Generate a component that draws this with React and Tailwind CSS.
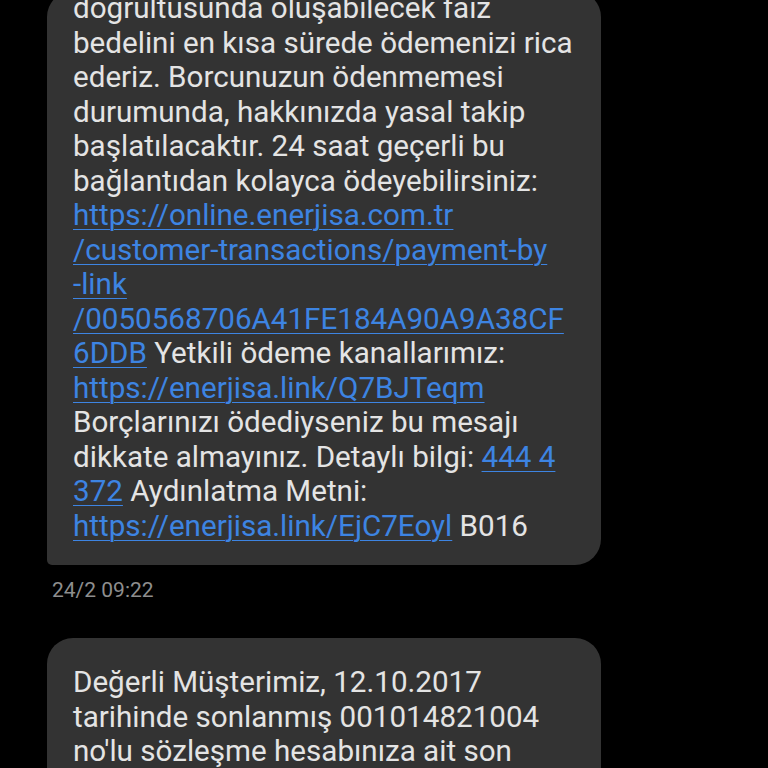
const Link = ({ children }) => (
  <span className="text-[#3d84e2] underline decoration-1 underline-offset-[4px]">{children}</span>
)

const Line = ({ children }) => <div className="whitespace-nowrap">{children}</div>

export default function App() {
  return (
    <div className="h-[768px] w-[768px] overflow-hidden bg-black font-['Roboto',sans-serif] text-[29.6px] leading-[34.5px] text-[#e4e4e4]">
      <div className="-mt-[9px] ml-[47px] w-[554px] rounded-tl-[26px] rounded-tr-[26px] rounded-br-[26px] rounded-bl-[5px] bg-[#333333] px-[26px] pb-[22px]">
        <Line>doğrultusunda oluşabilecek faiz</Line>
        <Line>bedelini en kısa sürede ödemenizi rica</Line>
        <Line>ederiz. Borcunuzun ödenmemesi</Line>
        <Line>durumunda, hakkınızda yasal takip</Line>
        <Line>başlatılacaktır. 24 saat geçerli bu</Line>
        <Line>bağlantıdan kolayca ödeyebilirsiniz:</Line>
        <Line><Link>https://online.enerjisa.com.tr</Link></Line>
        <Line><Link>/customer-transactions/payment-by</Link></Line>
        <Line><Link>-link</Link></Line>
        <Line><Link>/0050568706A41FE184A90A9A38CF</Link></Line>
        <Line><Link>6DDB</Link> Yetkili ödeme kanallarımız:</Line>
        <Line><Link>https://enerjisa.link/Q7BJTeqm</Link></Line>
        <Line>Borçlarınızı ödediyseniz bu mesajı</Line>
        <Line>dikkate almayınız. Detaylı bilgi: <Link>444 4</Link></Line>
        <Line><Link>372</Link> Aydınlatma Metni:</Line>
        <Line><Link>https://enerjisa.link/EjC7Eoyl</Link> B016</Line>
      </div>
      <div className="ml-[52px] mt-[12px] text-[21px] leading-[26px] text-[#8e8e8e]">24/2 09:22</div>
      <div className="ml-[47px] mt-[35px] w-[554px] rounded-[26px] bg-[#333333] px-[26px] pt-[27px] pb-[22px]">
        <Line>Değerli Müşterimiz, 12.10.2017</Line>
        <Line>tarihinde sonlanmış 001014821004</Line>
        <Line>no'lu sözleşme hesabınıza ait son</Line>
        <Line>döneme ait tüketim bedeli</Line>
      </div>
    </div>
  )
}
